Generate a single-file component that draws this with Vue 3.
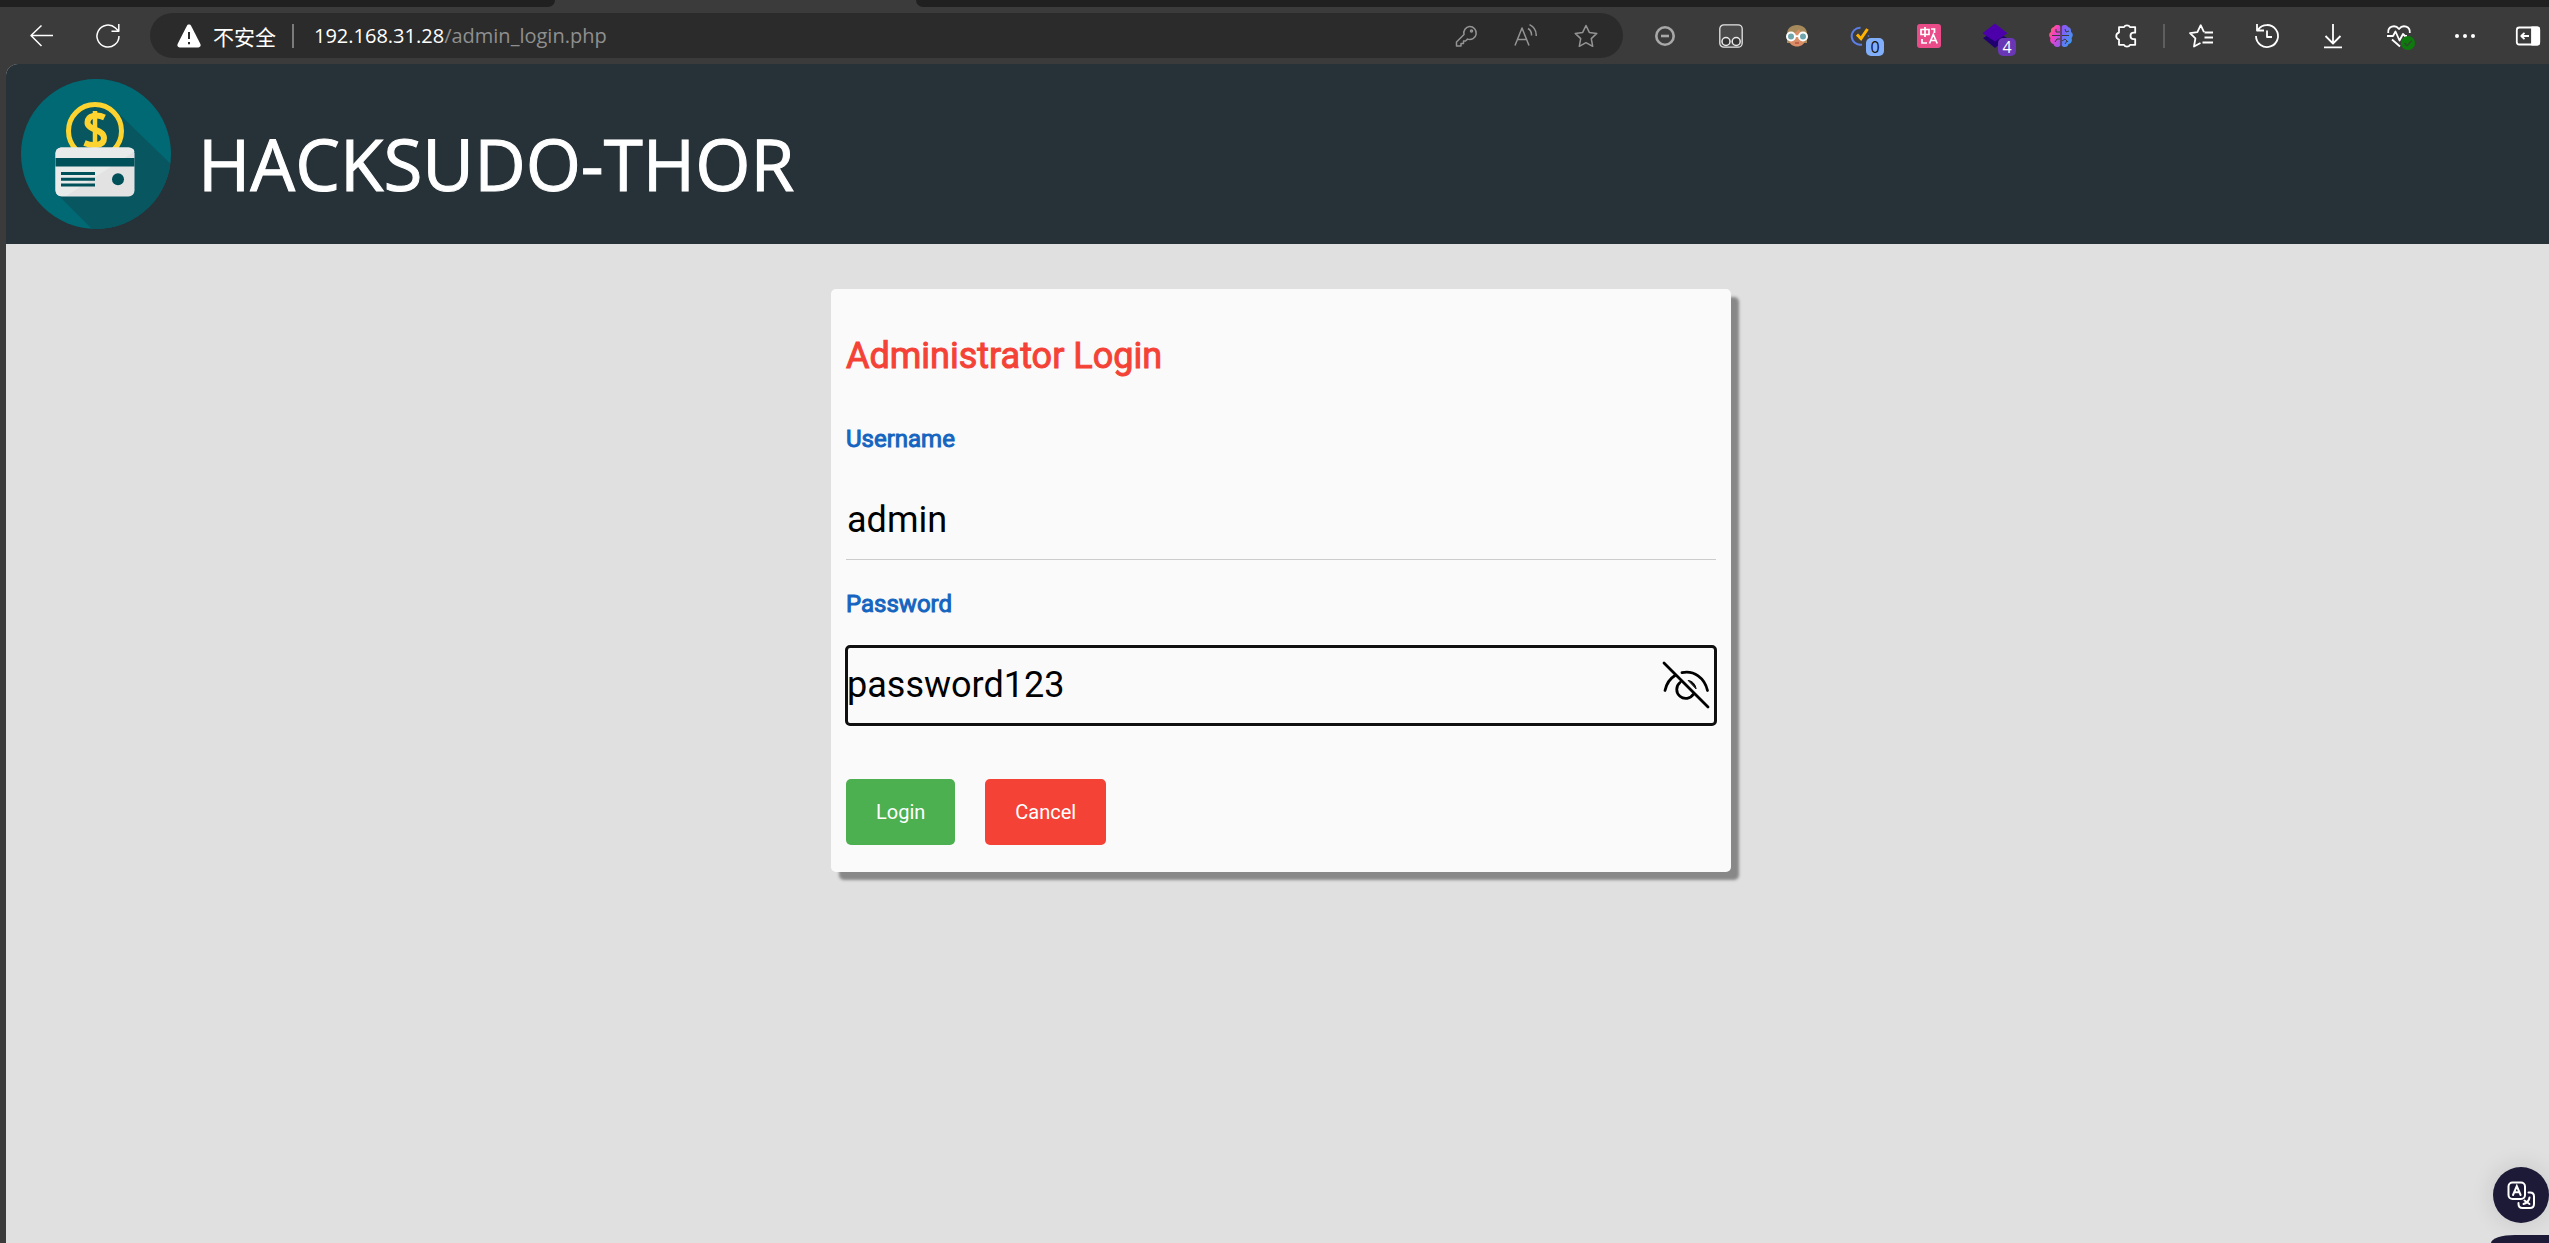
<script setup>
import { ref } from 'vue'

const username = ref('admin')
const password = ref('password123')
const showPassword = ref(true)
</script>

<template>
  <div class="browser">
    <div class="tabs">
      <div class="tabs-before"></div>
      <div class="tabs-after"></div>
    </div>

    <nav class="toolbar" aria-label="Browser toolbar">
      <div class="nav-buttons">
        <button class="icon" aria-label="Back">
          <svg viewBox="0 0 24 24" class="line"><path d="M23 11.5H1M11.5 1.5 1 11.5l10.500 10.500" /></svg>
        </button>
        <button class="icon" aria-label="Reload">
          <svg viewBox="0 0 24 24" class="line"><path d="M23 12A11 11 0 1 1 19.500 4L22.500 7M22.800 0v7.300H15.500" /></svg>
        </button>
      </div>

      <div class="address">
        <svg class="warning" viewBox="0 0 24 24"><path d="M12 .5c1 0 1.700.5 2.200 1.400l9.200 18.200c.8 1.700-.2 3.400-2 3.400H2.600c-1.800 0-2.800-1.700-2-3.400L9.800 1.900C10.300 1 11 .5 12 .5z" fill="#fff" /><path d="M12 8v7M12 18v2.200" stroke="#2b2b2b" stroke-width="2" /></svg>
        <span class="insecure">不安全</span>
        <span class="address-rule"></span>
        <span class="url"><span class="host">192.168.31.28</span>/admin_login.php</span>
        <div class="address-actions">
          <button class="icon" aria-label="Passwords">
            <svg viewBox="0 0 24 24" class="line grey"><path d="M15.500 2.500a6.500 6.500 0 1 1-2 12.600L11.500 17H9.500v2.500H7V22H2.500v-4L10 10.500a6.500 6.500 0 0 1 5.500-8z" /><circle cx="17.500" cy="7" r="1" /></svg>
          </button>
          <button class="icon" aria-label="Read aloud">
            <svg viewBox="0 0 24 24" class="line grey"><path d="M1 21.500 8 4l7 17.500M3.500 15.500h9M14 4.500c2.500 1.500 3.700 4.200 3.500 7M15.500.7c4.700 2.300 7 6.500 6.700 11.300" /></svg>
          </button>
          <button class="icon" aria-label="Add to favorites">
            <svg viewBox="0 0 24 24" class="line grey"><path d="m12 1.500 3.300 6.900 7.500 1-5.500 5.200 1.400 7.700L12 18.700l-6.700 3.600 1.400-7.700L1.200 9.400l7.500-1z" /></svg>
          </button>
        </div>
      </div>

      <div class="group">
        <button class="icon" aria-label="Blocker">
          <svg viewBox="0 0 24 24"><circle cx="12" cy="12" r="8.700" fill="none" stroke="#a8a8a8" stroke-width="2.600" /><path d="M8 12h8" stroke="#a8a8a8" stroke-width="2.600" /></svg>
        </button>
        <button class="icon" aria-label="User scripts">
          <svg viewBox="0 0 24 24" fill="none"><rect x=".8" y=".8" width="22.400" height="22.400" rx="4" fill="#4a4a4a" stroke="#e4e4e4" stroke-width="1.300" /><circle cx="7" cy="17.500" r="4" fill="#333" stroke="#e8e8e8" stroke-width="1.500" /><circle cx="17.200" cy="17.500" r="4" fill="#333" stroke="#e8e8e8" stroke-width="1.500" /></svg>
        </button>
        <button class="icon" aria-label="Profile switcher">
          <svg viewBox="0 0 24 24"><path d="M2 19V10C2 4.500 6 1 12 1s10 3.500 10 9v9z" fill="#a58a5c" /><path d="M4 10c5-.5 8-2 10-5 1 3 3 4.500 6 5v6c0 4-4 6.500-8 6.500S4 20 4 16z" fill="#d98e68" /><circle cx="6" cy="12.500" r="4" fill="#6fa6ae" stroke="#fff" stroke-width="2" /><circle cx="18" cy="12.500" r="4" fill="#6fa6ae" stroke="#fff" stroke-width="2" /><path d="M10 12.200h4" stroke="#fff" stroke-width="1.800" /><path d="M10 19h4" stroke="#b9543f" stroke-width="1.500" /></svg>
        </button>
        <button class="icon" aria-label="Tasks">
          <svg viewBox="0 0 24 24" fill="none"><path d="M9.500 3.700a8.500 8.500 0 1 0 1.500 16.800" stroke="#5c7fe6" stroke-width="2" /><path d="m6 10.500 4 4.200L16.500 5" stroke="#ffb300" stroke-width="3" /><circle cx="17.500" cy="12" r=".8" fill="#5c7fe6" /></svg>
          <span class="badge blue">0</span>
        </button>
        <button class="icon" aria-label="Translate extension">
          <svg viewBox="0 0 24 24" fill="none" stroke="#fff" stroke-width="1.700"><rect width="24" height="24" rx="3" fill="#ea4c89" stroke="none" /><path d="M4 5.500h8v5H4zM8 3v10M14 5h3.500v4M5 15v4h5M12.500 19.500 16.300 10.500l3.900 9M14 16.500h5" /></svg>
        </button>
        <button class="icon" aria-label="Layers">
          <svg viewBox="0 0 24 24"><path d="m0 14 12-7 12 7-12 10z" fill="#20006e" /><path d="m12-.5 12.500 9.700L12 17.500-.5 9.200z" fill="#4b00aa" /></svg>
          <span class="badge violet">4</span>
        </button>
        <button class="icon" aria-label="Assistant">
          <svg viewBox="0 0 24 24" fill="none">
            <defs>
              <linearGradient id="brain-left" x1="0" y1="0" x2="1" y2="1"><stop offset="0" stop-color="#ff8a2a" /><stop offset=".4" stop-color="#f83fc3" /><stop offset="1" stop-color="#8a5cf5" /></linearGradient>
              <linearGradient id="brain-right" x1="0" y1="0" x2="1" y2="1"><stop offset="0" stop-color="#9a4df5" /><stop offset="1" stop-color="#28a8f5" /></linearGradient>
            </defs>
            <path d="M11.300 2.500v19C9.500 24 5 23.500 4.500 20 1.500 19.500.5 16.500 1.500 14-.5 12 0 9 2 8c-.5-3 1-4.500 3-5C6 .5 10 .5 11.300 2.500z" fill="url(#brain-left)" />
            <path d="M12.700 2.500v19c1.800 2.500 6.300 2 6.800-1.500 3-.5 4-3.500 3-6 2-2 1.500-5-.5-6 .5-3-1-4.500-3-5-1-2.500-5-2.500-6.300-.5z" fill="url(#brain-right)" />
            <path d="M3 11.500h8M7 5v3h4M6 18l2-3h3M13 11.500h7M16 5l1 3 3-1M13 17l3-2 3 3M16 20l2-3" stroke="#3b3b3b" stroke-width="1" />
          </svg>
        </button>
        <button class="icon" aria-label="Extensions">
          <svg viewBox="0 0 24 24" class="line bold"><path d="M8 3.200h1a3.300 3 0 0 1 6 0h5.200v5.500h-1.500a3.200 3.200 0 0 0 0 6.400h1.500v5.700H15a3.300 3 0 0 1-6 0H4V15.500a3.600 3.600 0 0 1 0-7V3.200z" /></svg>
        </button>
      </div>

      <span class="group-rule"></span>

      <div class="group">
        <button class="icon" aria-label="Favorites">
          <svg viewBox="0 0 24 24" class="line bold"><path d="M15.500 8.500h8.500M15.500 13.500h8.500M13.500 18.500h10.500M15 8.200 11.700 1.200 8.400 8.200 1 9.200l5.400 5.200L5 22.500l6.500-3.500" /></svg>
        </button>
        <button class="icon" aria-label="History">
          <svg viewBox="0 0 24 24" class="line bold"><path d="M1 12A11 11 0 1 0 3 5.700M2 0v6.500h7M12 6.500V13h5" /></svg>
        </button>
        <button class="icon" aria-label="Downloads">
          <svg viewBox="0 0 24 24" class="line bold"><path d="M12 0v19M4.500 12 12 19.500 19.500 12M3 23.300h18" /></svg>
        </button>
        <button class="icon" aria-label="Browser essentials">
          <svg viewBox="0 0 24 24" class="line bold"><path d="M1.200 9C.5 2.500 8 0 12 5c4-5 11.500-2.500 10.800 4M0 12h6l2.500-4.500 4 9L16 10l2 2h2M5 15.500l8 7" /></svg>
          <span class="check"><svg viewBox="0 0 14 14"><path d="m3.500 7 2.500 2.700 4.800-5" fill="none" stroke="#2d4a2d" stroke-width="1.600" /></svg></span>
        </button>
        <button class="icon" aria-label="Settings and more">
          <svg viewBox="0 0 24 24" fill="#fff"><circle cx="4" cy="12" r="2" /><circle cx="12" cy="12" r="2" /><circle cx="20" cy="12" r="2" /></svg>
        </button>
        <button class="icon" aria-label="Sidebar">
          <svg viewBox="3 0 24 24" class="line bold"><rect x=".8" y="3.500" width="22.400" height="17" rx="2.500" /><path d="M16 3.500h5.500c1 0 1.700.7 1.700 1.700v13.600c0 1-.7 1.700-1.700 1.700H16z" fill="#fff" /><path d="M13 12H5.500M8.500 8.800 5.300 12l3.200 3.200" /></svg>
        </button>
      </div>
    </nav>

    <div class="page">
      <header class="site-header">
        <svg class="logo" viewBox="0 0 150 150" aria-hidden="true">
          <defs><clipPath id="disc"><circle cx="75" cy="75" r="75" /></clipPath></defs>
          <circle cx="75" cy="75" r="75" fill="#006974" />
          <g clip-path="url(#disc)">
            <path d="M94 31 160 95v65H81L37 116z" fill="#075660" />
          </g>
          <circle cx="74" cy="52" r="26.500" fill="#075660" stroke="#fdd32f" stroke-width="5" />
          <path d="M83.500 38.500c-7-3.500-17-2.500-17 5 0 8 16.500 6.500 16.500 15.500 0 8-11 8.500-19.500 5" fill="none" stroke="#fdd32f" stroke-width="6" />
          <path d="M74 32v38" stroke="#fdd32f" stroke-width="4.500" />
          <rect x="34.500" y="68.500" width="79" height="49" rx="6" fill="#e2e2e3" />
          <path d="M40.500 68.500h67c3 0 5 1 6 4L45 117h-4.500c-4 0-6-3-6-6V74.500c0-4 3-6 6-6z" fill="#e9ebeb" />
          <path d="M34.500 79h79v8.500h-79z" fill="#00505a" />
          <path d="M40 94.500h34M40 100.300h34M40 106h34" stroke="#00505a" stroke-width="3" />
          <circle cx="97" cy="100.300" r="6" fill="#00505a" />
        </svg>
        <h1>HACKSUDO-THOR</h1>
      </header>

      <main>
        <form class="card" @submit.prevent>
          <h2>Administrator Login</h2>
          <div class="field">
            <label for="username">Username</label>
            <input id="username" v-model="username" type="text" autocomplete="off" spellcheck="false" />
          </div>
          <div class="field">
            <label for="password">Password</label>
            <div class="password">
              <input id="password" v-model="password" class="active" :type="showPassword ? 'text' : 'password'" autocomplete="off" spellcheck="false" />
              <button type="button" class="reveal" aria-label="Hide password" @click="showPassword = !showPassword">
                <svg viewBox="0 0 48 48" fill="none" stroke="#000" stroke-width="2.800" stroke-linecap="round"><path d="M2 2l44 44M3 29.500C4.500 22.500 8 17.500 13 14.500M20 11.700c12-2.500 22.500 5 25.500 17.800M18 21.500a9 9 0 1 0 13.500 11.500" /><path d="M26.500 19.500c4 .5 7 4 7.500 8z" fill="#000" stroke-width="1" /></svg>
              </button>
            </div>
          </div>
          <div class="actions">
            <button type="submit" class="button login">Login</button>
            <button type="button" class="button cancel">Cancel</button>
          </div>
        </form>
      </main>
    </div>

    <div class="floating">
      <button class="translate" aria-label="Translate page">
        <svg viewBox="0 0 28 28" fill="none" stroke="#fff" stroke-width="2" stroke-linecap="round"><rect x="1.500" y="1.500" width="16.500" height="16.500" rx="4" /><path d="m6 14 3.800-9 3.800 9M7.300 11.300h5M21.500 11.500h1.500c2.500 0 4 1.500 4 4V23c0 2.500-1.500 4-4 4h-7.500c-2.500 0-4-1.500-4-4v-1M16.500 23c3.500-1 5.500-3 6-6.500M17.500 19.500l5 3.500" /></svg>
      </button>
      <button class="more" aria-label="More tools"></button>
    </div>
  </div>
</template>

<style>
html,
body {
  margin: 0;
  background: #3b3b3b;
}
</style>

<style scoped>
* {
  box-sizing: border-box;
}

.browser {
  display: flex;
  flex-direction: column;
  min-height: 100vh;
  overflow: hidden;
  background: #3b3b3b;
  font-family: Roboto, "Liberation Sans", sans-serif;
}

button {
  border: 0;
  padding: 0;
  background: none;
  font-family: inherit;
  cursor: pointer;
}

svg {
  display: block;
  width: 100%;
  height: 100%;
  overflow: visible;
}

.tabs {
  display: flex;
  gap: 361px;
  height: 7px;
}

.tabs-before {
  flex: 0 0 555px;
  background: #202020;
  border-bottom-right-radius: 8px;
}

.tabs-after {
  flex: 1;
  background: #202020;
  border-bottom-left-radius: 8px;
}

.toolbar {
  display: flex;
  align-items: center;
  height: 57px;
  padding: 0 6px 0 30px;
}

.nav-buttons,
.group {
  display: flex;
  gap: 42px;
}

.icon {
  position: relative;
  flex: none;
  width: 24px;
  height: 24px;
}

.line {
  fill: none;
  stroke: #fff;
  stroke-width: 1.5;
  stroke-linejoin: round;
}

.line.bold {
  stroke-width: 1.8;
}

.line.grey {
  stroke: #949494;
}

.address {
  display: flex;
  align-items: center;
  flex: 1;
  height: 45px;
  margin: 0 30px;
  padding: 0 25px 0 27px;
  border-radius: 23px;
  background: #2b2b2b;
  color: #8f8f8f;
  white-space: nowrap;
}

.warning {
  flex: none;
  width: 24px;
  height: 24px;
}

.insecure {
  margin-left: 12px;
  color: #fff;
  font: 21px/30px "Noto Sans CJK SC", sans-serif;
}

.address-rule {
  width: 2px;
  height: 24px;
  margin: 0 20px 0 16px;
  background: #7a7a7a;
}

.url {
  font: 20px/30px "Open Sans", "Noto Sans", sans-serif;
}

.host {
  color: #fff;
}

.address-actions {
  display: flex;
  gap: 36px;
  margin-left: auto;
}

.group-rule {
  width: 2px;
  height: 24px;
  margin: 0 24px;
  background: #5e5e5e;
}

.badge {
  position: absolute;
  top: 14px;
  left: 15px;
  width: 18px;
  height: 18px;
  border-radius: 5px;
  font: 16px/18px "Open Sans", sans-serif;
  text-align: center;
}

.badge.blue {
  background: #82affa;
  color: #111;
}

.badge.violet {
  background: #6936b5;
  color: #fff;
}

.check {
  position: absolute;
  top: 12px;
  left: 14px;
  width: 14px;
  height: 14px;
  border-radius: 50%;
  background: #0e7a0d;
}

.page {
  flex: 1;
  margin-left: 6px;
  overflow: hidden;
  border-top-left-radius: 12px;
  background: #e0e0e0;
}

.site-header {
  display: flex;
  height: 180px;
  padding: 15px;
  background: #263238;
}

.logo {
  flex: none;
  width: 150px;
  height: 150px;
}

h1 {
  margin: 40px 0 0 27px;
  color: #fff;
  font: 400 71px/90px "Open Sans", "Noto Sans", sans-serif;
  -webkit-text-stroke: 1px #fff;
}

main {
  padding: 45px 0 45px 7px;
}

.card {
  position: relative;
  width: 100%;
  max-width: 900px;
  margin: 0 auto;
  padding: 40px 15px 27px;
  border-radius: 5px;
  background: #fafafa;
  box-shadow: 8px 8px 3px #888;
}

h2 {
  margin: 0 0 38px;
  color: #f44336;
  font-size: 36px;
  font-weight: 400;
  line-height: 54px;
  -webkit-text-stroke: 1px #f44336;
}

.field {
  margin-bottom: 26px;
}

label {
  display: block;
  margin-bottom: 24px;
  color: #1565c0;
  font-size: 24px;
  line-height: 36px;
  -webkit-text-stroke: 1px #1565c0;
}

input {
  display: block;
  width: 100%;
  height: 79px;
  padding: 0 1px;
  border: 0;
  border-bottom: 1px solid #ccc;
  background: transparent;
  color: #000;
  font: 36px/42px Roboto, "Liberation Sans", sans-serif;
}

.password {
  position: relative;
}

input.active {
  padding-right: 60px;
  border-color: transparent;
  border-radius: 4px;
  outline: 3px solid #101010;
  outline-offset: -2px;
  box-shadow: 0 0 0 2px #fff;
}

.reveal {
  position: absolute;
  top: 15px;
  right: 6px;
  width: 48px;
  height: 48px;
}

.actions {
  display: flex;
  gap: 30px;
  padding-top: 28px;
}

.button {
  height: 66px;
  padding: 0 30px;
  border-radius: 5px;
  color: #fff;
  font-size: 20px;
}

.login {
  background: #4caf50;
}

.cancel {
  background: #f44336;
}

.floating {
  position: fixed;
  right: 0;
  bottom: 0;
  display: flex;
  flex-direction: column;
  align-items: flex-end;
  gap: 12px;
}

.translate {
  width: 56px;
  height: 56px;
  padding: 14px;
  border-radius: 50%;
  background: #1c1a36;
  box-shadow: 0 0 24px rgba(0, 0, 0, 0.12);
}

.more {
  width: 58px;
  height: 8px;
  border-radius: 24px 0 0 0 / 8px 0 0 0;
  background: #1c1a36;
}
</style>
